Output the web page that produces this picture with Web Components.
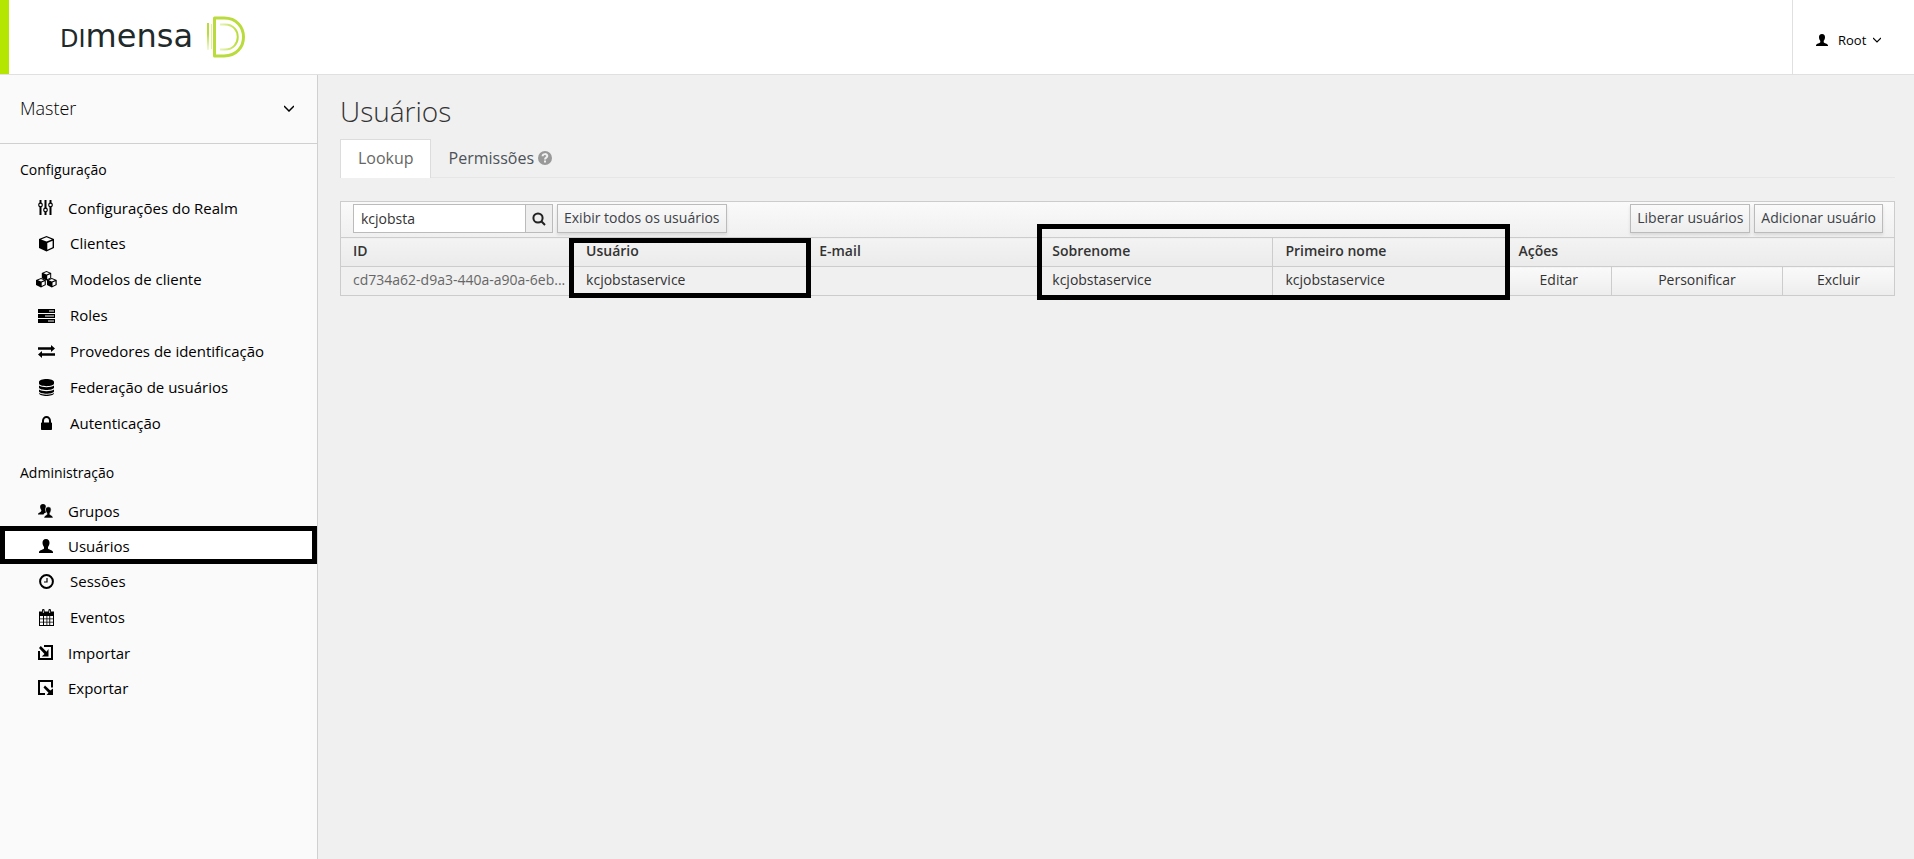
<!DOCTYPE html>
<html lang="pt-BR">
<head>
<meta charset="utf-8">
<title>Usuários</title>
<style>
    body {
        margin: 0;
        background: #f0f0f0;
        color: #333;
        font-family: "Open Sans", "Noto Sans", sans-serif;
        font-size: 14px;
        line-height: 20px;
    }
</style>
</head>
<body>
<admin-shell>
    <admin-header slot="header" user="Root"></admin-header>
    <side-bar slot="side" realm="Master">
        <nav-group label="Configuração">
            <nav-item icon="sliders" small>Configurações do Realm</nav-item>
            <nav-item icon="cube">Clientes</nav-item>
            <nav-item icon="cubes">Modelos de cliente</nav-item>
            <nav-item icon="server">Roles</nav-item>
            <nav-item icon="exchange">Provedores de identificação</nav-item>
            <nav-item icon="database">Federação de usuários</nav-item>
            <nav-item icon="lock">Autenticação</nav-item>
        </nav-group>
        <nav-group label="Administração">
            <nav-item icon="users" small>Grupos</nav-item>
            <nav-item icon="user" small active>Usuários</nav-item>
            <nav-item icon="clock">Sessões</nav-item>
            <nav-item icon="calendar">Eventos</nav-item>
            <nav-item icon="import" small>Importar</nav-item>
            <nav-item icon="export" small>Exportar</nav-item>
        </nav-group>
    </side-bar>
    <page-title>Usuários</page-title>
    <tab-bar>
        <tab-link active>Lookup</tab-link>
        <tab-link>Permissões <app-icon name="help"></app-icon></tab-link>
    </tab-bar>
    <user-table></user-table>
</admin-shell>

<script>
// [width, height, markup]
const icons = {
    sliders: [15, 15, '<path d="M2.5 0v15M7.5 0v15M12.5 0v15" stroke="currentColor" stroke-width="2"/><g fill="#fafafa" stroke="currentColor" stroke-width="1.2"><circle cx="2.5" cy="5" r="1.8"/><circle cx="7.5" cy="10" r="1.8"/><circle cx="12.5" cy="5" r="1.8"/></g>'],
    cube: [17, 17, '<path d="M8.500 1L16 4v9l-7.500 3.500L1 13V4z"/><path fill="#fafafa" d="M8.500 2.300L14 4.400 8.500 6.500 3 4.400zM9.300 8l5.300-2.200v6.500l-5.300 2.500z"/>'],
    cubes: [21, 17, '<path d="M10.500 0l4.700 2v5.300l-4.700 2.200-4.700-2.200V2z"/><path fill="#fafafa" d="M10.500 1l3 1.300-3 1.200-3-1.200zM11.200 4.600l3-1.300v3.500l-3 1.400z"/><path d="M5 7l4.800 2v5L5 16.500 0 14V9zM15.800 7l4.900 2v5l-4.900 2.500L11 14V9z"/><path fill="#fafafa" d="M5 8l3 1.300-3 1.200-3-1.200zM5.700 11.600l3-1.300v3.200l-3 1.500zM15.800 8l3 1.300-3 1.200-3-1.200zM16.500 11.600l3-1.300v3.200l-3 1.500z"/>'],
    server: [17, 15, '<path d="M0 1h17v4H0zM0 6h17v4H0zM0 11h17v4H0z"/><path fill="#fafafa" d="M11 2.500h5v1h-5zM7 7.500h9v1H7zM10 12.500h6v1h-6z"/>'],
    exchange: [17, 13, '<path d="M0 2.300h13V0l4 3.500L13 7V4.700H0zM17 8.300H4V6L0 9.500 4 13v-2.300h13z"/>'],
    database: [15, 17, '<path d="M0 3c0-4 15-4 15 0v1.500c0 3.500-15 3.500-15 0zM0 6.500c3 2.300 12 2.300 15 0v2.300c-1 3-14 3-15 0zM0 10.500c3 2.300 12 2.300 15 0v2c-1 3-14 3-15 0zM0 14c3 2.300 12 2.300 15 0v.500c-1 3.300-14 3.300-15 0z"/>'],
    lock: [11, 14, '<path d="M1 6.500V5a4.500 5 0 0 1 9 0v1.500h.300q.700 0 .700.700v6q0 .800-.800.800H.800Q0 14 0 13.200v-6q0-.700.700-.700zM3 6.500h5V5a2.500 3 0 0 0-5 0z" fill-rule="evenodd"/>'],
    user: [14, 14, '<path d="M7 0c2.500 0 3.600 1.700 3.500 4-.1 1.800-.800 3.200-1.500 4v1.500c.500 1.300 4.500 1.300 5 3.500v1H0v-1c.500-2.200 4.500-2.200 5-3.500V8C4.300 7.200 3.600 5.800 3.500 4 3.400 1.700 4.500 0 7 0z"/>'],
    users: [15, 14, '<path d="M5 0c2 0 3 1.200 2.800 3-.1.700-.4 1-.4 1.700 0 1.300.5 2.500 1.600 3.300-1.500.7-3 1-3.500 2.500H0V10c.5-1.700 3-1.500 3.300-3V6C2.500 5 2 4 2.100 2.700 2.200 1 3.200 0 5 0z"/><path stroke="#fafafa" stroke-width=".6" d="M10.300 2.800c2 0 3 1.300 2.800 3.200-.1 1.400-.6 2.200-1.200 3v1.300c.4 1.200 3 1.200 3.100 2.900v.8H6v-.8c.3-1.700 2.600-1.600 2.900-2.900V9C8.200 8.200 7.600 7.400 7.500 6c-.1-1.900.8-3.200 2.800-3.200z"/>'],
    clock: [15, 15, '<g fill="none" stroke="currentColor"><circle cx="7.500" cy="7.500" r="6.400" stroke-width="2"/><path d="M8 4v4H5" stroke-width="1.200"/></g>'],
    calendar: [17, 17, '<path d="M1 2.500h3V1.300a1.300 1.300 0 0 1 2.600 0v1.200h3.800V1.300a1.300 1.300 0 0 1 2.600 0v1.200h3V17H1z"/><path fill="#fafafa" d="M2 7h3v2.500H2zM6 7h2.500v2.500H6zM9.300 7h2v2.500h-2zM12.200 7H15v2.500h-2.800zM2 10.200h3v2.500H2zM6 10.200h2.500v2.500H6zM9.300 10.200h2v2.500h-2zM12.200 10.200H15v2.500h-2.800zM2 13.500h3V16H2zM6 13.500h2.500V16H6zM9.300 13.500h2V16h-2zM12.200 13.500H15V16h-2.800zM4.900 1.500h.8v2.600h-.8zM11.300 1.500h.8v2.600h-.8z"/>'],
    import: [15, 15, '<path d="M6 0h9v15H0V6h2v7h11V2H6z"/><path d="M2.800 1l5.700 5.700L10.500 4v7.500H3.700L6.500 9 1 3z"/>'],
    export: [15, 15, '<path d="M0 0h15v7.500h-2V2H2v11h5v2H0z"/><path d="M7 5.500l5.300 5L15 8.500V15H8.500l2-2.300L5.500 7.500z"/>'],
    search: [14, 14, '<g fill="none" stroke="currentColor" stroke-width="2"><circle cx="6" cy="6" r="4.600"/><path d="M9.300 9.300L13 13"/></g>'],
    chevron: [10, 7, '<path d="M0 1l5 5 5-5" fill="none" stroke="currentColor" stroke-width="1.500"/>'],
    help: [14, 14, '<circle cx="7" cy="7" r="7" fill="#999"/><path d="M4.600 5.200C4.700 2.500 9.300 2.400 9.300 5.100 9.300 6.700 7 6.600 7 8.500" fill="none" stroke="#f0f0f0" stroke-width="2"/><path d="M6 9.600h2v2H6z" fill="#f0f0f0"/>']
};

class AppIcon extends HTMLElement {
    constructor() {
        super();
        this.attachShadow({ mode: 'open' });
    }

    connectedCallback() {
        const [w, h, body] = icons[this.getAttribute('name')];
        const size = this.getAttribute('size') || w;
        this.shadowRoot.innerHTML = `
            <style>
                :host { display: inline-flex; align-items: center; justify-content: center; flex: none; }
                svg { display: block; flex: none; }
            </style>
            <svg width="${size}" height="${Math.round(h * size / w)}" viewBox="0 0 ${w} ${h}" fill="currentColor" aria-hidden="true">${body}</svg>
        `;
    }
}

class AdminShell extends HTMLElement {
    constructor() {
        super();
        this.attachShadow({ mode: 'open' });
        this.shadowRoot.innerHTML = `
            <style>
                :host { display: flex; flex-direction: column; min-height: 100vh; }
                .body { display: flex; flex: 1; }
                main { flex: 1; min-width: 0; padding: 20px 19px 20px 22px; }
            </style>
            <slot name="header"></slot>
            <div class="body">
                <slot name="side"></slot>
                <main><slot></slot></main>
            </div>
        `;
    }
}

class AdminHeader extends HTMLElement {
    constructor() {
        super();
        this.attachShadow({ mode: 'open' });
        this.shadowRoot.innerHTML = `
            <style>
                :host {
                    display: flex;
                    justify-content: space-between;
                    height: 74px;
                    background: #fff;
                    border-bottom: 1px solid #e0e0e0;
                }
                .brand {
                    display: flex;
                    align-items: center;
                    gap: 13px;
                    padding-left: 51px;
                    border-left: 9px solid #b5e600;
                    color: #1f2a2a;
                    text-decoration: none;
                }
                .word { font: 32px/40px "DejaVu Sans", sans-serif; }
                .caps { font-size: 24px; text-transform: uppercase; }
                .user {
                    display: flex;
                    align-items: center;
                    width: 122px;
                    padding: 5px 0 0 23px;
                    border: 0;
                    border-left: 1px solid #e0e0e0;
                    background: none;
                    color: #000;
                    font: 13px/20px "Open Sans", sans-serif;
                }
                .name { margin: 0 7px 0 10px; }
            </style>
            <a class="brand" href="#">
                <span class="word"><span class="caps">Di</span>mensa</span>
                <svg width="40" height="42" viewBox="0 0 40 42" fill="none" stroke="#b9dc3c" aria-hidden="true">
                    <defs>
                        <linearGradient id="fade"><stop offset="0" stop-color="#e6f3b8"/><stop offset="1" stop-color="#b9dc3c"/></linearGradient>
                        <linearGradient id="drop" x2="0" y2="1"><stop offset="0.4" stop-color="#b9dc3c"/><stop offset="1" stop-color="#f2f9dc"/></linearGradient>
                    </defs>
                    <path d="M8.500 2H18c26 0 26 38 0 38H8.500z" stroke-width="3" stroke-linejoin="round"/>
                    <path d="M14 8.500h5c17 0 17 25 0 25h-5" stroke-width="2" stroke="url(#fade)"/>
                    <rect x="1" y="7" width="2" height="27" fill="url(#drop)" stroke="none"/>
                    <path d="M5.500 8v25" stroke-width="1" stroke="#dff0a5"/>
                </svg>
            </a>
            <button class="user">
                <app-icon name="user" size="12"></app-icon>
                <span class="name"></span>
                <app-icon name="chevron" size="8"></app-icon>
            </button>
        `;
        this.shadowRoot.querySelector('.name').textContent = this.getAttribute('user');
    }
}

class SideBar extends HTMLElement {
    constructor() {
        super();
        this.attachShadow({ mode: 'open' });
        this.shadowRoot.innerHTML = `
            <style>
                :host {
                    display: block;
                    flex: none;
                    width: 317px;
                    background: #fafafa;
                    border-right: 1px solid #d0d0d0;
                    color: #000;
                }
                .realm {
                    display: flex;
                    align-items: center;
                    justify-content: space-between;
                    width: 100%;
                    height: 69px;
                    padding: 0 23px 2px 20px;
                    border: 0;
                    border-bottom: 1px solid #d0d0d0;
                    background: none;
                    color: inherit;
                    font: 300 18px/24px "Open Sans", sans-serif;
                }
                nav { display: flex; flex-direction: column; gap: 6px; }
            </style>
            <button class="realm"><span></span><app-icon name="chevron"></app-icon></button>
            <nav><slot></slot></nav>
        `;
        this.shadowRoot.querySelector('span').textContent = this.getAttribute('realm');
    }
}

class NavGroup extends HTMLElement {
    constructor() {
        super();
        this.attachShadow({ mode: 'open' });
        this.shadowRoot.innerHTML = `
            <style>
                :host { display: block; padding-top: 16px; }
                h2 { margin: 0 0 10px; padding-left: 20px; font-size: 14px; font-weight: 400; line-height: 20px; }
            </style>
            <h2></h2>
            <slot></slot>
        `;
        this.shadowRoot.querySelector('h2').textContent = this.getAttribute('label');
    }
}

class NavItem extends HTMLElement {
    constructor() {
        super();
        this.attachShadow({ mode: 'open' });
        this.shadowRoot.innerHTML = `
            <style>
                :host { display: block; position: relative; }
                a {
                    display: flex;
                    align-items: center;
                    gap: 15px;
                    height: 36px;
                    padding-left: 38px;
                    color: #000;
                    font-size: 15px;
                    text-decoration: none;
                }
                app-icon { width: 17px; }
                :host([small]) a { height: 35px; }
                :host([small]) app-icon { width: 15px; }
                :host([active]) a { background: #fff; }
                :host([active])::after {
                    content: "";
                    position: absolute;
                    inset: -2px 0 -1px;
                    border: 5px solid #000;
                }
            </style>
            <a href="#"><app-icon name="${this.getAttribute('icon')}"></app-icon><span><slot></slot></span></a>
        `;
    }
}

class PageTitle extends HTMLElement {
    constructor() {
        super();
        this.attachShadow({ mode: 'open' });
        this.shadowRoot.innerHTML = `
            <style>
                :host { display: block; }
                h1 { margin: 0 0 12px; font-size: 28px; font-weight: 300; line-height: 32px; }
            </style>
            <h1><slot></slot></h1>
        `;
    }
}

class TabBar extends HTMLElement {
    constructor() {
        super();
        this.attachShadow({ mode: 'open' });
        this.shadowRoot.innerHTML = `
            <style>
                :host { display: flex; border-bottom: 1px solid #e6e6e6; margin-bottom: 23px; }
            </style>
            <slot></slot>
        `;
    }
}

class TabLink extends HTMLElement {
    constructor() {
        super();
        this.attachShadow({ mode: 'open' });
        this.shadowRoot.innerHTML = `
            <style>
                :host { display: block; margin-bottom: -1px; }
                a {
                    display: flex;
                    align-items: center;
                    gap: 4px;
                    height: 36px;
                    padding: 0 16px 2px 17px;
                    border: 1px solid transparent;
                    border-bottom: 0;
                    color: #4d5258;
                    font-size: 16px;
                    text-decoration: none;
                }
                :host([active]) a { background: #fff; border-color: #dcdcdc; color: #666; }
            </style>
            <a href="#"><slot></slot></a>
        `;
    }
}

class UserTable extends HTMLElement {
    constructor() {
        super();
        this.attachShadow({ mode: 'open' });
        this.shadowRoot.innerHTML = `
            <style>
                :host { display: block; position: relative; }
                .toolbar {
                    display: flex;
                    align-items: flex-start;
                    gap: 4px;
                    height: 36px;
                    padding: 2px 11px 0 12px;
                    box-sizing: border-box;
                    border: 1px solid #ccc;
                    border-bottom: 0;
                    background: linear-gradient(#fafafa, #f0f0f0);
                }
                form { display: flex; }
                input, button { box-sizing: border-box; height: 29px; margin: 0; border: 1px solid #bbb; font: 14px/20px "Open Sans", sans-serif; }
                input { width: 173px; padding: 0 7px; background: #fff; color: #333; }
                .find { display: flex; align-items: center; justify-content: center; width: 27px; padding: 0; border-left: 0; background: #eee; color: #222; }
                .btn {
                    padding: 0 6px 2px;
                    background: linear-gradient(#fafafa, #ededed);
                    box-shadow: 0 2px 3px rgba(0, 0, 0, .1);
                    color: #3d4248;
                    font-weight: 500;
                }
                .spacer { flex: 1; }
                table { width: 100%; table-layout: fixed; border-collapse: collapse; }
                th, td {
                    height: 20px;
                    padding: 3px 12px 5px;
                    border: 1px solid #ccc;
                    text-align: left;
                    white-space: nowrap;
                }
                th { font-weight: 600; background: linear-gradient(#f3f3f3, #ebebeb); }
                .id { padding-right: 0; }
                .id a { color: #666; text-decoration: none; }
                .action { padding: 0; background: linear-gradient(#fafafa, #ededed); }
                .action button { display: block; width: 100%; height: 28px; border: 0; padding: 0 0 2px; background: none; color: #333; }
                .mark { position: absolute; box-sizing: border-box; border: 5px solid #000; pointer-events: none; }
                .login { left: calc(15% - 4px); width: calc(15% + 8px); top: 37px; bottom: -2px; }
                .names { left: calc(45% - 3px); width: calc(30% + 7px); top: 23px; bottom: -4px; }
                .w-user { width: 15%; }
                .w-impersonate { width: 171px; }
                .w-delete { width: 112px; }
            </style>
            <div class="toolbar">
                <form>
                    <input type="text" value="kcjobsta" aria-label="Pesquisar">
                    <button class="find" type="button" aria-label="Pesquisar"><app-icon name="search"></app-icon></button>
                </form>
                <button class="btn">Exibir todos os usuários</button>
                <span class="spacer"></span>
                <button class="btn">Liberar usuários</button>
                <button class="btn">Adicionar usuário</button>
            </div>
            <table>
                <colgroup>
                    <col class="w-user" span="5">
                    <col>
                    <col class="w-impersonate">
                    <col class="w-delete">
                </colgroup>
                <thead>
                    <tr><th>ID</th><th>Usuário</th><th>E-mail</th><th>Sobrenome</th><th>Primeiro nome</th><th colspan="3">Ações</th></tr>
                </thead>
                <tbody>
                    <tr>
                        <td class="id"><a href="#">cd734a62-d9a3-440a-a90a-6eb...</a></td>
                        <td>kcjobstaservice</td>
                        <td></td>
                        <td>kcjobstaservice</td>
                        <td>kcjobstaservice</td>
                        <td class="action"><button>Editar</button></td>
                        <td class="action"><button>Personificar</button></td>
                        <td class="action"><button>Excluir</button></td>
                    </tr>
                </tbody>
            </table>
            <div class="mark login"></div>
            <div class="mark names"></div>
        `;
    }
}

window.customElements.define('app-icon', AppIcon);
window.customElements.define('admin-shell', AdminShell);
window.customElements.define('admin-header', AdminHeader);
window.customElements.define('side-bar', SideBar);
window.customElements.define('nav-group', NavGroup);
window.customElements.define('nav-item', NavItem);
window.customElements.define('page-title', PageTitle);
window.customElements.define('tab-bar', TabBar);
window.customElements.define('tab-link', TabLink);
window.customElements.define('user-table', UserTable);
</script>
</body>
</html>
